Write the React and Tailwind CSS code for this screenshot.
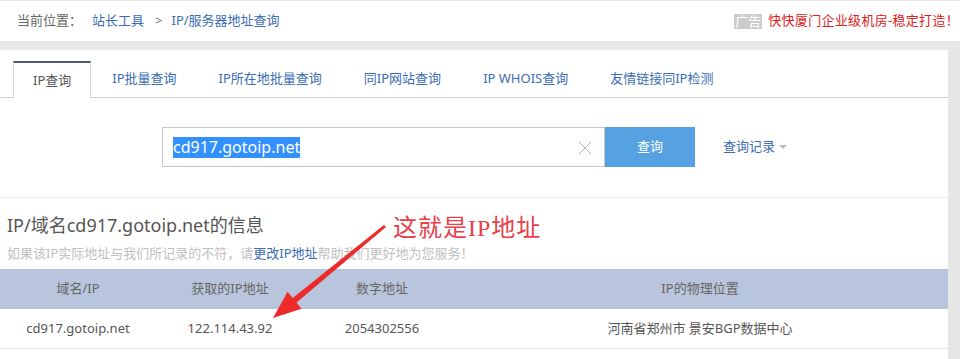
import React from "react";

const FONT = { fontFamily: '"Noto Sans", "Noto Sans CJK SC", sans-serif' };

function Tab({ label, active }) {
  if (active) {
    return (
      <div className="h-[37px] -mb-px px-[19px] flex items-center bg-white border-t-2 border-t-[#525b6b] border-x border-x-[#cfd3da] text-[13px] text-[#555]">
        {label}
      </div>
    );
  }
  return (
    <div className="h-[36px] px-[21px] flex items-center text-[13px] text-[#3a6db3]">{label}</div>
  );
}

export default function App() {
  const tabs = ["IP批量查询", "IP所在地批量查询", "同IP网站查询", "IP WHOIS查询", "友情链接同IP检测"];
  return (
    <div className="relative w-[960px] h-[359px] overflow-hidden bg-white" style={FONT}>
      {/* top breadcrumb bar */}
      <div className="h-[41px] border-t border-[#e6e6e6] flex items-center justify-between pl-[17px] pr-[1px] text-[13px]">
        <div className="flex items-center">
          <span className="text-[#666]">当前位置：</span>
          <span className="ml-[10px] text-[#3a6db3]">站长工具</span>
          <span className="ml-[11px] text-[#777]">&gt;</span>
          <span className="ml-[9px] text-[#3a6db3]">IP/服务器地址查询</span>
        </div>
        <div className="flex items-center">
          <span className="h-[15px] w-[28px] bg-[#cccccc] text-white text-[13px] leading-[15px] flex items-center justify-center">广告</span>
          <span className="ml-[6px] text-[#e02020] text-[13px] tracking-[0.3px]">快快厦门企业级机房-稳定打造！</span>
        </div>
      </div>
      <div className="h-[9px] bg-[#e8e8e8]" />

      <div className="flex h-[309px]">
        <div className="w-[948px] relative">
          {/* tabs */}
          <div className="pt-[11px] pl-[13px] flex items-end border-b border-[#c9ced8]">
            <Tab label="IP查询" active />
            {tabs.map((t) => (
              <Tab key={t} label={t} />
            ))}
          </div>

          {/* search */}
          <div className="pt-[29px] pb-[30px] border-b border-[#ececec] flex items-center pl-[162px]">
            <div className="w-[443px] h-[40px] border border-[#c8c8c8] flex items-center pl-[10px] pr-[12px]">
              <span className="bg-[#3390ff] text-white text-[16px] leading-[21px] h-[21px]">cd917.gotoip.net</span>
              <div className="flex-1" />
              <svg width="14" height="14" viewBox="0 0 14 14" className="mt-[1px]">
                <path d="M1 1L13 13M13 1L1 13" stroke="#b5b5b5" strokeWidth="1" fill="none" />
              </svg>
            </div>
            <div className="w-[90px] h-[40px] bg-[#55a1e1] text-white text-[13px] flex items-center justify-center">查询</div>
            <div className="ml-[28px] flex items-center text-[13px] text-[#3a6db3]">
              查询记录
              <svg width="8" height="5" viewBox="0 0 8 5" className="ml-[4px]">
                <path d="M0 0H8L4 4Z" fill="#bbbbbb" />
              </svg>
            </div>
          </div>

          {/* info heading */}
          <div className="pl-[7px] pt-[13px] pb-[7px]">
            <div className="text-[18px] leading-[28px] text-[#555]">IP/域名cd917.gotoip.net的信息</div>
            <div className="mt-[5px] text-[13px] leading-[18px] text-[#c0c0c0]">
              如果该IP实际地址与我们所记录的不符，请<span className="text-[#3a6db3]">更改IP地址</span>帮助我们更好地为您服务！
            </div>
          </div>

          {/* table */}
          <div className="grid grid-cols-[156px_148px_156px_480px_8px] h-[40px] bg-[#b9c5dc] text-[13px] text-[#666] items-center text-center">
            <div>域名/IP</div>
            <div>获取的IP地址</div>
            <div>数字地址</div>
            <div>IP的物理位置</div>
            <div />
          </div>
          <div className="grid grid-cols-[156px_148px_156px_480px_8px] h-[40px] border-b border-[#e6e6e6] text-[13px] text-[#555] items-center text-center">
            <div>cd917.gotoip.net</div>
            <div>122.114.43.92</div>
            <div>2054302556</div>
            <div>河南省郑州市 景安BGP数据中心</div>
            <div />
          </div>

          {/* annotation */}
          <div
            className="absolute left-[393px] top-[162px] text-[24px] leading-[32px] tracking-[1px] text-[#e8404a]"
            style={{ fontFamily: '"Liberation Serif", "Noto Sans CJK SC", serif' }}
          >
            这就是IP地址
          </div>
        </div>
        <div className="w-[12px] bg-[#e6e6e6]" />
      </div>

      {/* arrow overlay */}
      <svg className="absolute left-0 top-0 pointer-events-none" width="960" height="359" viewBox="0 0 960 359">
        <polygon
          points="384,225 386,227 296.5,302.5 301.6,308.7 273,318 287.6,291.7 292.7,297.9"
          fill="#ee2b2b"
        />
      </svg>
    </div>
  );
}
